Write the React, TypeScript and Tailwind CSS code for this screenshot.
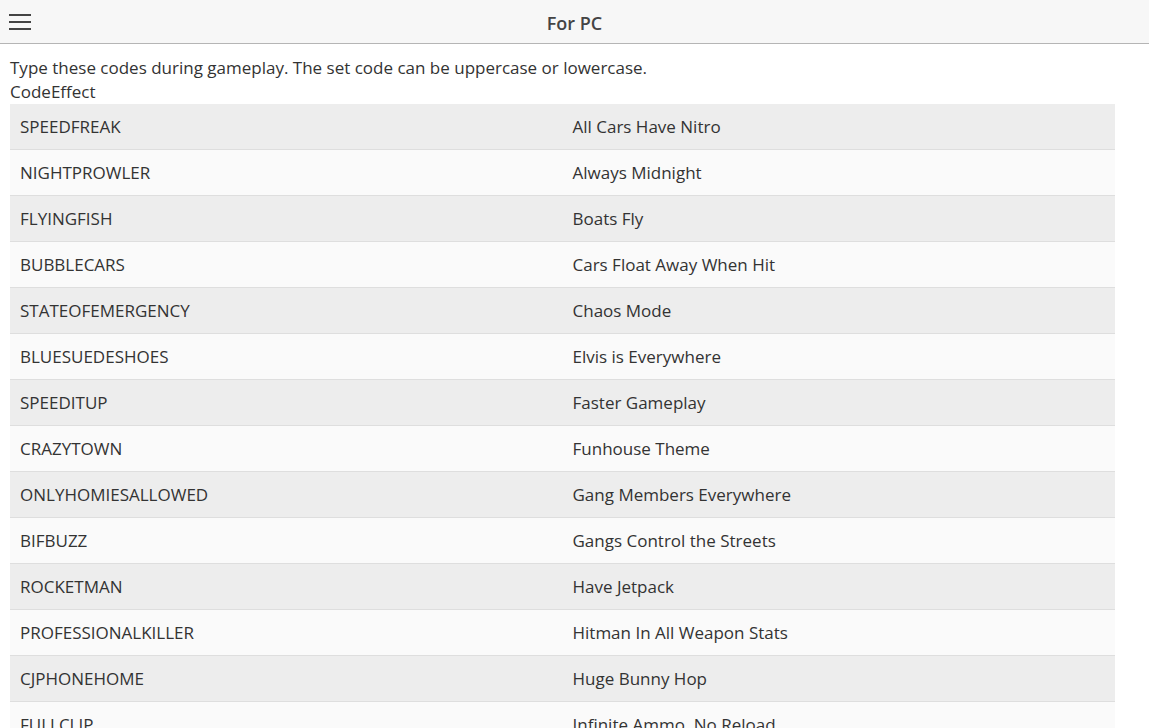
const cheats = [
  ["SPEEDFREAK", "All Cars Have Nitro"],
  ["NIGHTPROWLER", "Always Midnight"],
  ["FLYINGFISH", "Boats Fly"],
  ["BUBBLECARS", "Cars Float Away When Hit"],
  ["STATEOFEMERGENCY", "Chaos Mode"],
  ["BLUESUEDESHOES", "Elvis is Everywhere"],
  ["SPEEDITUP", "Faster Gameplay"],
  ["CRAZYTOWN", "Funhouse Theme"],
  ["ONLYHOMIESALLOWED", "Gang Members Everywhere"],
  ["BIFBUZZ", "Gangs Control the Streets"],
  ["ROCKETMAN", "Have Jetpack"],
  ["PROFESSIONALKILLER", "Hitman In All Weapon Stats"],
  ["CJPHONEHOME", "Huge Bunny Hop"],
  ["FULLCLIP", "Infinite Ammo, No Reload"],
  ["CVWKXAM", "Infinite Oxygen"],
  ["BAGUVIX", "Infinite Health"],
];

export default function App() {
  return (
    <div
      className="w-[1149px] min-h-screen bg-white text-[#333]"
      style={{ fontFamily: '"Segoe UI", "Open Sans", sans-serif' }}
    >
      <header className="relative flex h-[44px] items-center justify-center border-b border-[#b5b5b5] bg-[#f7f7f7] pt-[3px]">
        <button className="absolute left-[9px] top-[14px] flex h-[16px] w-[22px] flex-col justify-between">
          <span className="block h-[2px] w-full bg-[#444]" />
          <span className="block h-[2px] w-full bg-[#444]" />
          <span className="block h-[2px] w-full bg-[#444]" />
        </button>
        <h1 className="text-[18px] font-semibold text-[#444]">For PC</h1>
      </header>

      <div className="px-[10px] pt-[12px]">
        <p className="text-[17px] leading-[24px]">
          Type these codes during gameplay. The set code can be uppercase or lowercase.
        </p>
        <div className="text-[17px] leading-[24px]">CodeEffect</div>
        <div className="w-[1105px]">
          {cheats.map(([code, effect], i) => (
            <div
              key={code}
              className={`grid h-[46px] grid-cols-2 items-center border-b border-[#dedede] pt-[1px] text-[17px] ${
                i % 2 === 0 ? "bg-[#ededed]" : "bg-[#fafafa]"
              }`}
            >
              <div className="px-[10px]">{code}</div>
              <div className="px-[10px]">{effect}</div>
            </div>
          ))}
        </div>
      </div>
    </div>
  );
}
